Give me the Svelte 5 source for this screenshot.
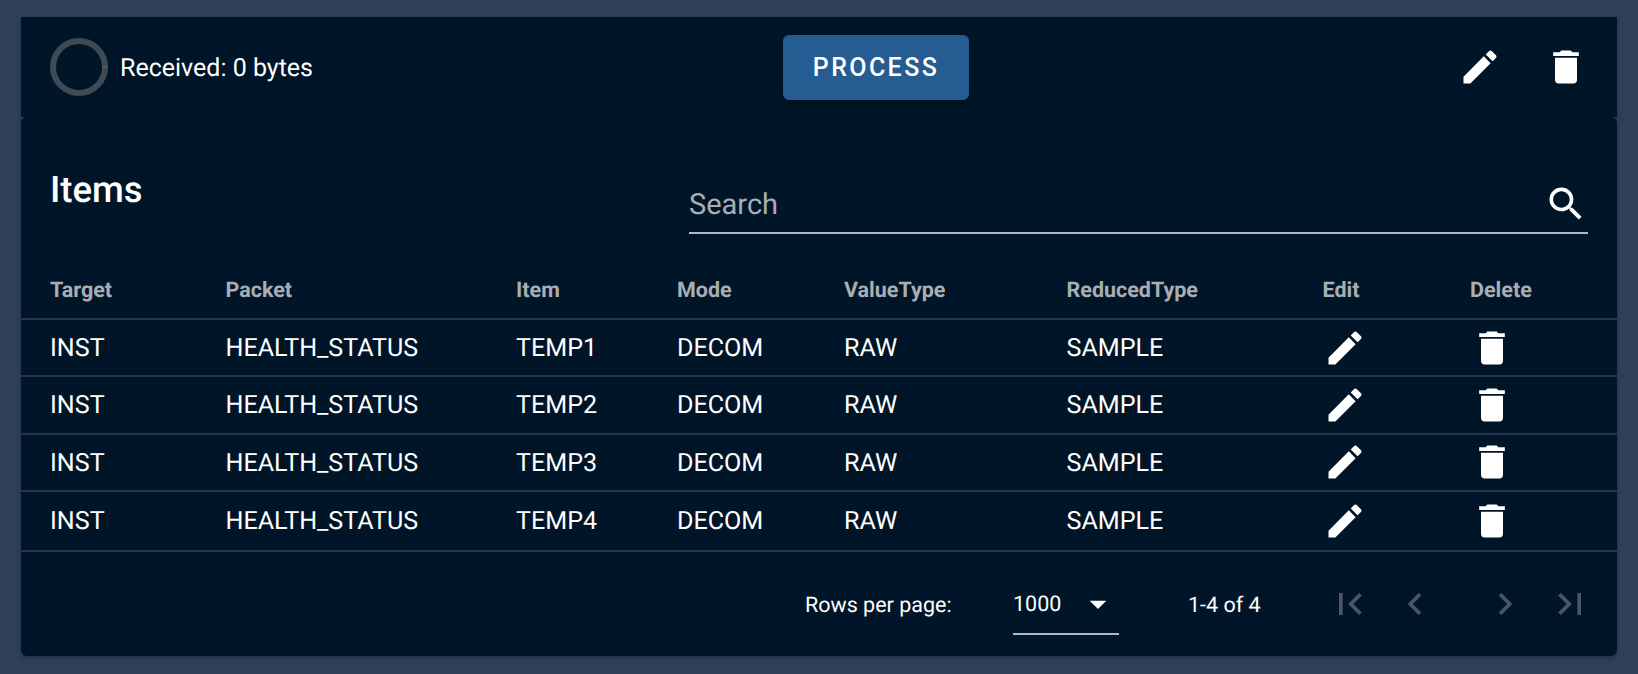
<script>
  const rows = ['TEMP1', 'TEMP2', 'TEMP3', 'TEMP4'];
  const pencil = 'M20.71,7.04C21.1,6.65 21.1,6 20.71,5.63L18.37,3.29C18,2.9 17.35,2.9 16.96,3.29L15.12,5.12L18.87,8.87M3,17.25V21H6.75L17.81,9.93L14.06,6.18L3,17.25Z';
  const trash = 'M19,4H15.5L14.5,3H9.5L8.5,4H5V6H19M6,19A2,2 0 0,0 8,21H16A2,2 0 0,0 18,19V7H6V19Z';
  const magnify = 'M9.5,3A6.5,6.5 0 0,1 16,9.5C16,11.11 15.41,12.59 14.44,13.73L14.71,14H15.5L20.5,19L19,20.5L14,15.5V14.71L13.73,14.44C12.59,15.41 11.11,16 9.5,16A6.5,6.5 0 0,1 3,9.5A6.5,6.5 0 0,1 9.5,3M9.5,5C7,5 5,7 5,9.5C5,12 7,14 9.5,14C12,14 14,12 14,9.5C14,7 12,5 9.5,5Z';
  const first = 'M18.41,16.59L13.82,12L18.41,7.41L17,6L11,12L17,18L18.41,16.59M6,6H8V18H6V6Z';
  const prev = 'M15.41,16.58L10.83,12L15.41,7.41L14,6L8,12L14,18L15.41,16.58Z';
  const next = 'M8.59,16.58L13.17,12L8.59,7.41L10,6L16,12L10,18L8.59,16.58Z';
  const last = 'M5.59,7.41L10.18,12L5.59,16.59L7,18L13,12L7,6L5.59,7.41M16,6H18V18H16V6Z';
</script>

{#snippet icon(d, cls = '')}
  <svg class="icon {cls}" viewBox="0 0 24 24" aria-hidden="true"><path {d} /></svg>
{/snippet}

<main class="page">
  <header class="topbar">
    <div class="status">
      <svg class="spinner" viewBox="0 0 58 58" aria-hidden="true">
        <circle cx="29" cy="29" r="26" />
        <rect x="52" y="28.6" width="6" height="0.8" />
      </svg>
      <span class="status-text">Received: 0 bytes</span>
    </div>
    <button class="process">PROCESS</button>
    <div class="actions">
      {@render icon(pencil)}
      {@render icon(trash)}
    </div>
  </header>

  <section class="card">
    <div class="title-row">
      <h2>Items</h2>
      <div class="search">
        <span>Search</span>
        {@render icon(magnify)}
      </div>
    </div>

    <table>
      <colgroup>
        <col class="c1" /><col class="c2" /><col class="c3" /><col class="c4" />
        <col class="c5" /><col class="c6" /><col class="c7" /><col class="c8" />
      </colgroup>
      <thead>
        <tr>
          <th>Target</th><th>Packet</th><th>Item</th><th>Mode</th>
          <th>ValueType</th><th>ReducedType</th><th>Edit</th><th>Delete</th>
        </tr>
      </thead>
      <tbody>
        {#each rows as item}
          <tr>
            <td>INST</td><td>HEALTH_STATUS</td><td>{item}</td><td>DECOM</td>
            <td>RAW</td><td>SAMPLE</td>
            <td>{@render icon(pencil)}</td>
            <td>{@render icon(trash)}</td>
          </tr>
        {/each}
      </tbody>
    </table>

    <footer class="pager">
      <span class="rows-label">Rows per page:</span>
      <div class="select">
        <span>1000</span>
        {@render icon('M7,10L12,15L17,10H7Z', 'caret')}
      </div>
      <span class="range">1-4 of 4</span>
      <div class="nav">
        <div class="nav-group">
          {@render icon(first)}
          {@render icon(prev)}
        </div>
        <div class="nav-group">
          {@render icon(next)}
          {@render icon(last)}
        </div>
      </div>
    </footer>
  </section>
</main>

<style>
  :global(body) {
    margin: 0;
    background: #2e3f5a;
    font-family: Roboto, "Liberation Sans", sans-serif;
    color: #fff;
    text-rendering: geometricPrecision;
  }
  .page {
    box-sizing: border-box;
    height: 674px;
    padding: 17px 21px 18px;
    overflow: hidden;
  }
  .icon {
    display: block;
    width: 44px;
    height: 44px;
    fill: #fff;
    flex: none;
  }
  .topbar {
    height: 100px;
    background: #011528;
    display: flex;
    align-items: center;
    padding: 0 29px;
    box-shadow: 0 3px 5px rgba(0, 0, 0, 0.2);
  }
  .status {
    display: flex;
    align-items: center;
    gap: 12px;
    width: 733px;
    font-size: 25px;
  }
  .status-text {
    padding-top: 2px;
  }
  .spinner {
    width: 58px;
    height: 58px;
  }
  .spinner circle {
    fill: none;
    stroke: #3f4a57;
    stroke-width: 6;
  }
  .spinner rect {
    fill: #6f7882;
  }
  .process {
    width: 186px;
    height: 65px;
    border: 0;
    border-radius: 6px;
    background: #255c91;
    color: #fff;
    font: 500 25px Roboto, sans-serif;
    letter-spacing: 2.4px;
    box-shadow: 0 3px 2px rgba(0, 0, 0, 0.2);
  }
  .actions {
    margin-left: auto;
    display: flex;
    gap: 42px;
  }
  .card {
    position: relative;
    height: 539px;
    background: #011528;
    border-radius: 6px;
    box-shadow: 0 2px 4px rgba(0, 0, 0, 0.25);
    display: flex;
    flex-direction: column;
  }
  .title-row {
    height: 154px;
    box-sizing: border-box;
    padding: 46px 29px 0;
    display: flex;
    justify-content: space-between;
    align-items: flex-start;
  }
  h2 {
    margin: 6px 0 0;
    font-size: 36.5px;
    font-weight: 500;
    line-height: 42px;
  }
  .search {
    box-sizing: border-box;
    width: 899px;
    height: 72px;
    margin-top: -1px;
    padding-top: 21px;
    border-bottom: 2px solid #b3b8be;
    display: flex;
    justify-content: space-between;
    font-size: 29px;
    color: #a9aeb4;
    line-height: 44px;
  }
  .search .icon {
    margin-top: -1px;
  }
  table {
    width: 100%;
    table-layout: fixed;
    border-collapse: separate;
    border-spacing: 0;
  }
  .c1 { width: 204.5px; }
  .c2 { width: 290.5px; }
  .c3 { width: 161px; }
  .c4 { width: 167px; }
  .c5 { width: 222.5px; }
  .c6 { width: 256px; }
  .c7 { width: 147.5px; }
  th, td {
    box-sizing: border-box;
    padding: 0;
    text-align: left;
    border-bottom: 2px solid #24344a;
  }
  th:first-child, td:first-child {
    padding-left: 29px;
  }
  th {
    height: 49px;
    padding-bottom: 9px;
    font-size: 21.5px;
    font-weight: 700;
    color: #a9aeb4;
  }
  td {
    height: 57.33px;
    padding-top: 2px;
    font-size: 25.1px;
  }
  td .icon {
    margin-top: -2px;
  }
  tbody tr:last-child td {
    height: 60px;
  }
  .pager {
    display: flex;
    align-items: center;
    box-sizing: border-box;
    height: 104px;
    padding-top: 4px;
    font-size: 21.5px;
  }
  .rows-label {
    margin-left: 784px;
    width: 208px;
  }
  .select {
    box-sizing: border-box;
    width: 106px;
    height: 59px;
    border-bottom: 2px solid #b3b8be;
    display: flex;
    align-items: center;
    justify-content: space-between;
  }
  .select .caret {
    width: 40px;
    height: 40px;
    margin-right: 1px;
    margin-bottom: 2px;
  }
  .range {
    margin-left: 69px;
    width: 140px;
  }
  .nav {
    display: flex;
    gap: 46px;
    margin-bottom: 4px;
  }
  .nav-group {
    display: flex;
    gap: 21px;
  }
  .nav .icon {
    fill: #4c5663;
  }
</style>
